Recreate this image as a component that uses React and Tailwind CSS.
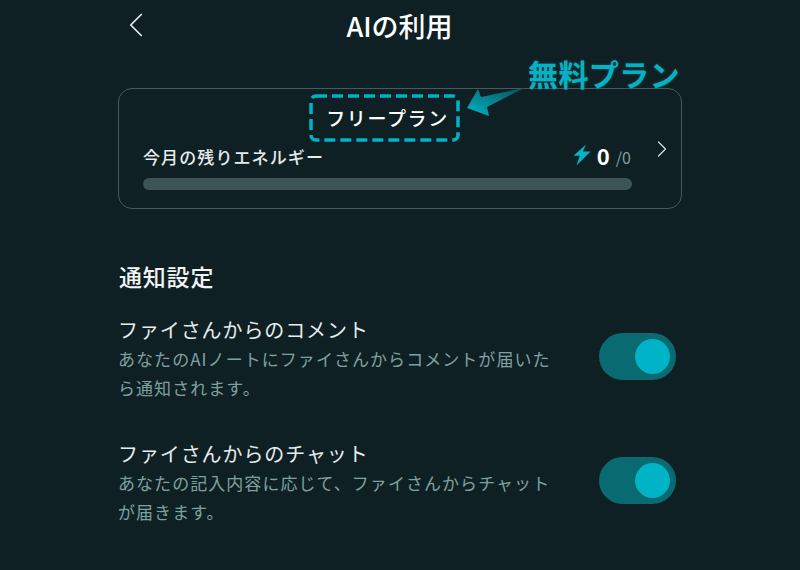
import { ChevronLeft, ChevronRight } from "lucide-react";

const Toggle = () => (
  <div className="flex h-[47px] w-[77px] shrink-0 items-center justify-end rounded-full bg-[#0a6a72] pr-[6px]">
    <div className="h-[35px] w-[35px] rounded-full bg-[#00b3c6]" />
  </div>
);

const SettingRow = ({ title, lines }) => (
  <div className="flex items-center justify-between">
    <div className="w-[450px]">
      <div className="text-[20px] leading-[30px] tracking-[0.9px] text-[#e6ecec]">{title}</div>
      <div className="text-[17px] leading-[28.5px] tracking-[1.05px] text-[#7fa0a0]">
        {lines.map((line) => (
          <div key={line} className="whitespace-nowrap">{line}</div>
        ))}
      </div>
    </div>
    <div className="pb-[5px] pr-[6px]">
      <Toggle />
    </div>
  </div>
);

const App = () => {
  return (
    <div
      className="relative h-[570px] w-[800px] overflow-hidden bg-[#0f2024] px-[118px] text-white"
      style={{ fontFamily: '"Noto Sans CJK JP", "Noto Sans", sans-serif' }}
    >
      {/* Header */}
      <div className="grid h-[50px] grid-cols-[1fr_auto_1fr] items-center">
        <ChevronLeft size={42} strokeWidth={1} className="-ml-[3px] -mt-[1px] text-[#e6ecec]" />
        <h1 className="-ml-[1px] text-[27px] font-medium leading-none">AIの利用</h1>
      </div>

      {/* Plan card */}
      <div className="relative mt-[38px] flex h-[121px] rounded-[14px] border border-[#445c5d] pl-[24px]">
        <div className="w-[489px]">
          <div className="pt-[16px] text-center text-[19px] font-medium leading-[26px] tracking-[1.6px]">
            フリープラン
          </div>
          <div className="mt-[14px] flex h-[24px] items-center justify-between">
            <span className="text-[17px] font-medium leading-[24px] tracking-[1.1px] text-[#e6ecec]">今月の残りエネルギー</span>
            <span className="flex items-center">
              <svg width="18" height="22" viewBox="0 0 18 22" className="mr-[6px] -translate-y-[2px]">
                <path d="M13 0.5 L0.5 11.8 H6.8 L3.5 21.5 L17.5 7.6 H9.8 Z" fill="#00b3c6" />
              </svg>
              <span className="-translate-y-[2px] text-[22px] font-bold leading-[24px]">0</span>
              <span className="ml-[6px] mr-[1px] text-[16px] leading-[24px] text-[#7fa0a0]">/0</span>
            </span>
          </div>
          <div className="mt-[9px] h-[12px] rounded-full bg-[#3d5455]" />
        </div>
        <ChevronRight size={28} strokeWidth={1.1} className="ml-[16px] self-center text-[#d5dede]" />

        {/* Annotation */}
        <svg width="151" height="48" viewBox="0 0 151 48" className="absolute left-[190px] top-[5px]">
          <rect
            x="2"
            y="2"
            width="147"
            height="44"
            rx="5"
            fill="none"
            stroke="#00b3c6"
            strokeWidth="3.5"
            strokeDasharray="11 5"
          />
        </svg>
      </div>

      <svg width="70" height="34" viewBox="0 0 70 34" className="absolute left-[462px] top-[86px]">
        <defs>
          <linearGradient id="arrowFill" x1="0" y1="1" x2="1" y2="0">
            <stop offset="0" stopColor="#00b3c6" />
            <stop offset="1" stopColor="#0a5058" />
          </linearGradient>
        </defs>
        <path d="M5 22 L16 3 L19 11 L62 2 L25 21 L27 30 Z" fill="url(#arrowFill)" />
      </svg>
      <div
        className="absolute left-[528px] top-[51px] text-[30px] font-bold leading-[44px] tracking-[0.4px] text-[#00b3c6]"
        style={{ textShadow: "0 0 3px #3a4a4c" }}
      >
        無料プラン
      </div>

      {/* Notifications */}
      <h2 className="mt-[52px] pl-[1px] text-[23px] font-medium leading-[30px] tracking-[0.8px] text-[#f2f5f5]">通知設定</h2>
      <div className="mt-[24px] flex flex-col gap-[37px]">
        <SettingRow
          title="ファイさんからのコメント"
          lines={["あなたのAIノートにファイさんからコメントが届いた", "ら通知されます。"]}
        />
        <SettingRow
          title="ファイさんからのチャット"
          lines={["あなたの記入内容に応じて、ファイさんからチャット", "が届きます。"]}
        />
      </div>
    </div>
  );
};

export default App;
